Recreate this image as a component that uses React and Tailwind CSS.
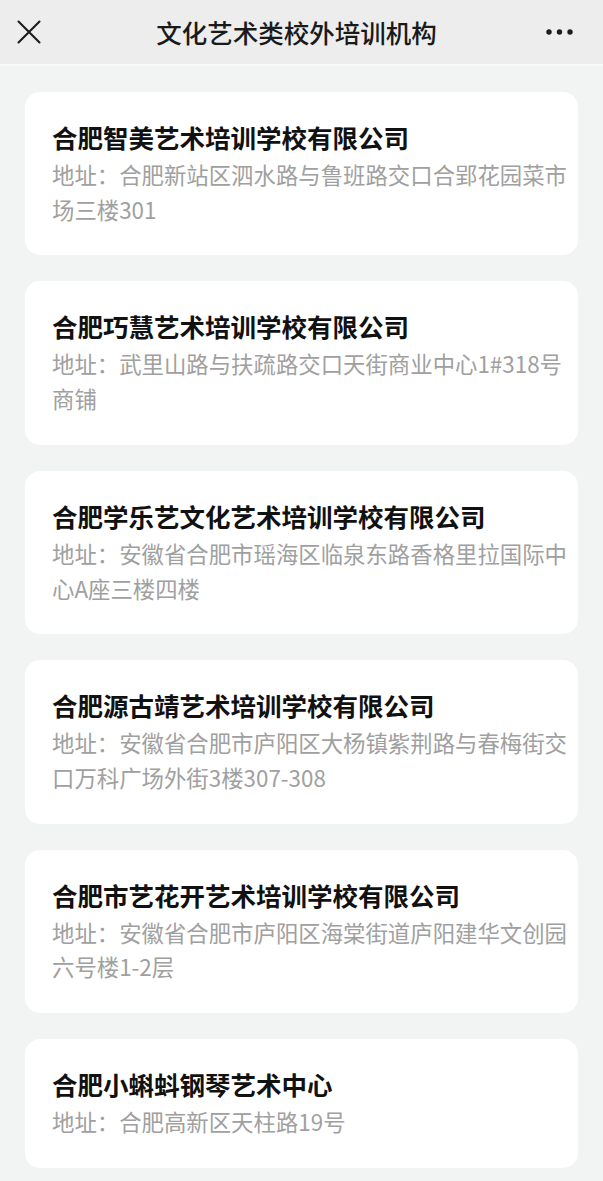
import React from "react";

const items = [
  { name: "合肥智美艺术培训学校有限公司", lines: ["地址：合肥新站区泗水路与鲁班路交口合郢花园菜市", "场三楼301"] },
  { name: "合肥巧慧艺术培训学校有限公司", lines: ["地址：武里山路与扶疏路交口天街商业中心1#318号", "商铺"] },
  { name: "合肥学乐艺文化艺术培训学校有限公司", lines: ["地址：安徽省合肥市瑶海区临泉东路香格里拉国际中", "心A座三楼四楼"] },
  { name: "合肥源古靖艺术培训学校有限公司", lines: ["地址：安徽省合肥市庐阳区大杨镇紫荆路与春梅街交", "口万科广场外街3楼307-308"] },
  { name: "合肥市艺花开艺术培训学校有限公司", lines: ["地址：安徽省合肥市庐阳区海棠街道庐阳建华文创园", "六号楼1-2层"] },
  { name: "合肥小蝌蚪钢琴艺术中心", lines: ["地址：合肥高新区天柱路19号"] },
];

export default function App() {
  return (
    <div
      className="w-[603px] h-[1181px] overflow-hidden bg-[#f2f3f3]"
      style={{ fontFamily: '"Noto Sans CJK SC", "Noto Sans", sans-serif' }}
    >
      <div className="h-[64px] bg-[#ededed] flex items-center justify-between px-[17px]">
        <svg width="24" height="24" viewBox="0 0 24 24" className="shrink-0">
          <path d="M1.5 1.5 L22.5 22.5 M22.5 1.5 L1.5 22.5" stroke="#1c1c1c" strokeWidth="2.1" strokeLinecap="round" fill="none" />
        </svg>
        <div className="text-[25.5px] leading-none text-[#1a1a1a] font-medium pl-[6px]">文化艺术类校外培训机构</div>
        <svg width="28" height="8" viewBox="0 0 28 8" className="shrink-0 mr-[12px]">
          <circle cx="3" cy="4" r="2.7" fill="#1c1c1c" />
          <circle cx="13.5" cy="4" r="2.7" fill="#1c1c1c" />
          <circle cx="24" cy="4" r="2.7" fill="#1c1c1c" />
        </svg>
      </div>
      <div className="h-[2px] bg-[#f8f8f8]" />
      <div className="flex flex-col gap-[26px] pt-[26px] px-[25px]">
        {items.map((it) => (
          <div key={it.name} className="bg-white rounded-[15px] pl-[27px] pt-[27px] pb-[29px]">
            <div className="text-[25.5px] leading-[36px] font-bold text-[#111111] whitespace-nowrap">{it.name}</div>
            <div className="mt-[2px] text-[22.4px] leading-[34.7px] text-[#a0a0a0] whitespace-nowrap">
              {it.lines.map((l, i) => (
                <div key={i}>{l}</div>
              ))}
            </div>
          </div>
        ))}
      </div>
    </div>
  );
}
